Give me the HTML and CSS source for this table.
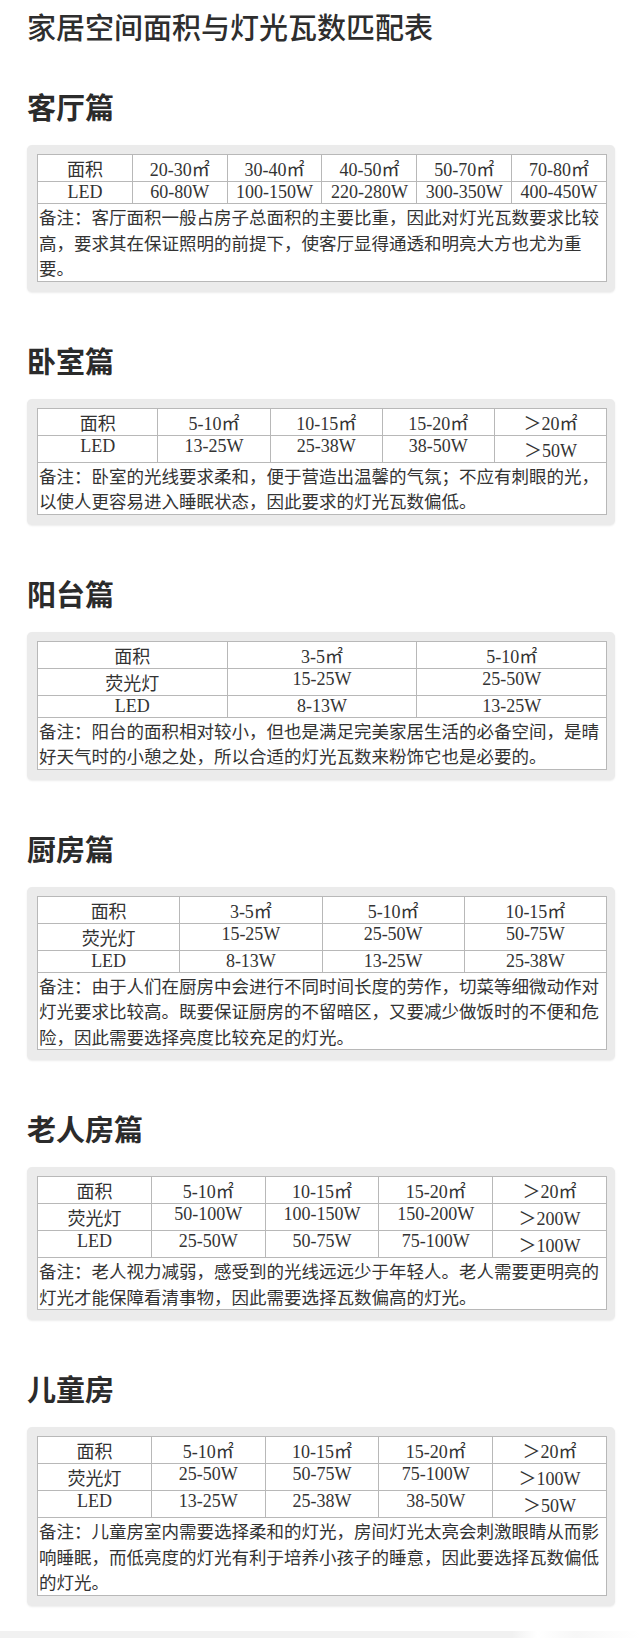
FILE: index.html
```html
<!DOCTYPE html>
<html lang="zh-CN">
<head>
<meta charset="utf-8">
<title>家居空间面积与灯光瓦数匹配表</title>
<link rel="stylesheet" href="styles.css">
</head>
<body>
<main class="page">
  <h1 class="page-title">家居空间面积与灯光瓦数匹配表</h1>

  <section class="room">
    <h2 class="room-title">客厅篇</h2>
    <div class="card">
      <table class="spec">
        <tr><td>面积</td><td>20-30㎡</td><td>30-40㎡</td><td>40-50㎡</td><td>50-70㎡</td><td>70-80㎡</td></tr>
        <tr><td>LED</td><td>60-80W</td><td>100-150W</td><td>220-280W</td><td>300-350W</td><td>400-450W</td></tr>
        <tr><td class="note" colspan="6">备注：客厅面积一般占房子总面积的主要比重，因此对灯光瓦数要求比较<br>高，要求其在保证照明的前提下，使客厅显得通透和明亮大方也尤为重<br>要。</td></tr>
      </table>
    </div>
  </section>

  <section class="room">
    <h2 class="room-title">卧室篇</h2>
    <div class="card">
      <table class="spec spec-wide-first">
        <tr><td>面积</td><td>5-10㎡</td><td>10-15㎡</td><td>15-20㎡</td><td>＞20㎡</td></tr>
        <tr><td>LED</td><td>13-25W</td><td>25-38W</td><td>38-50W</td><td>＞50W</td></tr>
        <tr><td class="note" colspan="5">备注：卧室的光线要求柔和，便于营造出温馨的气氛；不应有刺眼的光，<br>以使人更容易进入睡眠状态，因此要求的灯光瓦数偏低。</td></tr>
      </table>
    </div>
  </section>

  <section class="room">
    <h2 class="room-title">阳台篇</h2>
    <div class="card">
      <table class="spec">
        <tr><td>面积</td><td>3-5㎡</td><td>5-10㎡</td></tr>
        <tr><td>荧光灯</td><td>15-25W</td><td>25-50W</td></tr>
        <tr><td>LED</td><td>8-13W</td><td>13-25W</td></tr>
        <tr><td class="note" colspan="3">备注：阳台的面积相对较小，但也是满足完美家居生活的必备空间，是晴<br>好天气时的小憩之处，所以合适的灯光瓦数来粉饰它也是必要的。</td></tr>
      </table>
    </div>
  </section>

  <section class="room">
    <h2 class="room-title">厨房篇</h2>
    <div class="card">
      <table class="spec">
        <tr><td>面积</td><td>3-5㎡</td><td>5-10㎡</td><td>10-15㎡</td></tr>
        <tr><td>荧光灯</td><td>15-25W</td><td>25-50W</td><td>50-75W</td></tr>
        <tr><td>LED</td><td>8-13W</td><td>13-25W</td><td>25-38W</td></tr>
        <tr><td class="note" colspan="4">备注：由于人们在厨房中会进行不同时间长度的劳作，切菜等细微动作对<br>灯光要求比较高。既要保证厨房的不留暗区，又要减少做饭时的不便和危<br>险，因此需要选择亮度比较充足的灯光。</td></tr>
      </table>
    </div>
  </section>

  <section class="room">
    <h2 class="room-title">老人房篇</h2>
    <div class="card">
      <table class="spec">
        <tr><td>面积</td><td>5-10㎡</td><td>10-15㎡</td><td>15-20㎡</td><td>＞20㎡</td></tr>
        <tr><td>荧光灯</td><td>50-100W</td><td>100-150W</td><td>150-200W</td><td>＞200W</td></tr>
        <tr><td>LED</td><td>25-50W</td><td>50-75W</td><td>75-100W</td><td>＞100W</td></tr>
        <tr><td class="note" colspan="5">备注：老人视力减弱，感受到的光线远远少于年轻人。老人需要更明亮的<br>灯光才能保障看清事物，因此需要选择瓦数偏高的灯光。</td></tr>
      </table>
    </div>
  </section>

  <section class="room">
    <h2 class="room-title">儿童房</h2>
    <div class="card">
      <table class="spec">
        <tr><td>面积</td><td>5-10㎡</td><td>10-15㎡</td><td>15-20㎡</td><td>＞20㎡</td></tr>
        <tr><td>荧光灯</td><td>25-50W</td><td>50-75W</td><td>75-100W</td><td>＞100W</td></tr>
        <tr><td>LED</td><td>13-25W</td><td>25-38W</td><td>38-50W</td><td>＞50W</td></tr>
        <tr><td class="note" colspan="5">备注：儿童房室内需要选择柔和的灯光，房间灯光太亮会刺激眼睛从而影<br>响睡眠，而低亮度的灯光有利于培养小孩子的睡意，因此要选择瓦数偏低<br>的灯光。</td></tr>
      </table>
    </div>
  </section>

  <div class="foot-bar"></div>
</main>
</body>
</html>
```

FILE: styles.css
```css
html, body {
  margin: 0;
  padding: 0;
  background: #ffffff;
}

body {
  font-family: "Noto Sans CJK SC", "Noto Sans", sans-serif;
  color: #333333;
}

.page {
  width: 640px;
  height: 1644px;
  overflow: hidden;
  padding: 11px 25px 0 27px;
  box-sizing: border-box;
  display: flex;
  flex-direction: column;
}

.page-title {
  margin: 0;
  font-size: 29px;
  line-height: 30px;
  font-weight: 500;
  color: #2e2e2e;
}

.room {
  margin-top: 54px;
}

.room:first-of-type {
  margin-top: 51px;
}

.room-title {
  margin: 0 0 25px;
  font-size: 29px;
  line-height: 28px;
  font-weight: 700;
  color: #2b2b2b;
}

.card {
  background: #ebebeb;
  border-radius: 5px;
  padding: 9px 8px 10px 10px;
  box-shadow: 0 1px 2px rgba(0, 0, 0, 0.08);
}

.spec {
  width: 100%;
  table-layout: fixed;
  border-collapse: collapse;
  background: #ffffff;
  border: 1px solid #a9a9a9;
}

.spec td {
  border: 1px solid #b8b8b8;
  padding: 0;
  text-align: center;
  vertical-align: top;
  font-family: "Liberation Serif", "Noto Sans CJK SC", serif;
  font-size: 18px;
  line-height: normal;
  color: #333333;
  white-space: nowrap;
}

.spec-wide-first tr:first-child td:first-child {
  width: 21%;
}

.spec td.note {
  text-align: left;
  padding: 0 0 0 1px;
  font-family: "Noto Sans CJK SC", sans-serif;
  font-size: 17.5px;
  line-height: 25.5px;
  color: #333333;
}

.foot-bar {
  margin: 25px -25px 0 -27px;
  height: 7px;
  flex: none;
  background: linear-gradient(to right, #f1f1f1 0%, #f1f1f1 80%, #ffffff 84%, #f7f7f7 90%, #ffffff 100%);
}
```
